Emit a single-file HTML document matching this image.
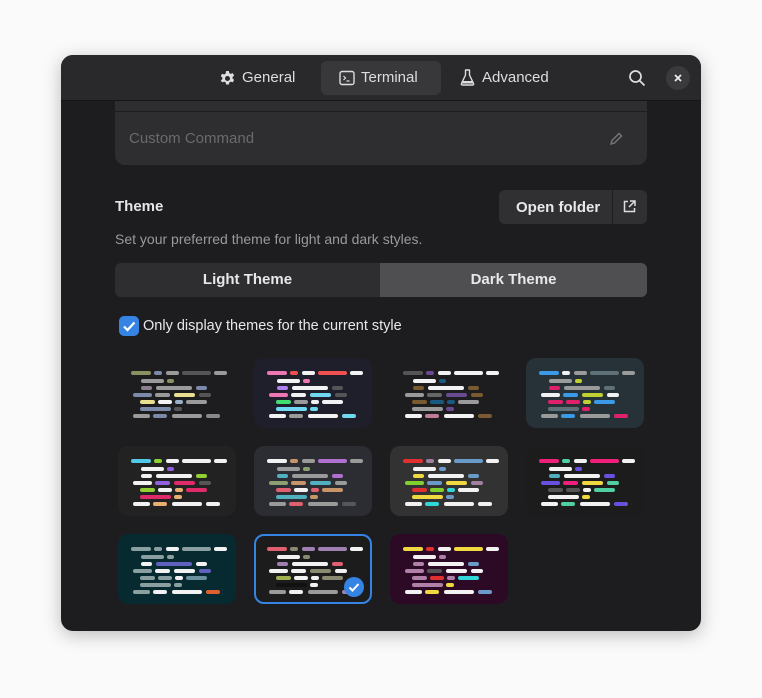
<!DOCTYPE html>
<html><head><style>
*{box-sizing:border-box;margin:0;padding:0}
body{width:762px;height:698px;background:#fafafa;font-family:"Liberation Sans",sans-serif;position:relative;overflow:hidden}
.win{position:absolute;left:61px;top:55px;width:640px;height:576px;background:#1d1d1f;border-radius:12px;overflow:hidden;box-shadow:0 4px 18px rgba(0,0,0,.25)}
.hdr{position:absolute;left:0;top:0;width:640px;height:46px;background:#29292b;border-bottom:1px solid #161617}
.t{position:absolute;color:#e8e8e8;font-size:15px}
.tab{position:absolute;top:6px;height:34px;line-height:34px;color:#ddd;font-size:15px}
.tile{position:absolute;width:118px;height:70px;border-radius:10px}
.b{position:absolute;height:4px;border-radius:2px}
</style></head><body>
<div class="win">
 <div class="hdr">
  <svg style="position:absolute;left:159px;top:16px" width="15" height="15" viewBox="0 0 16 16"><path fill="#ddd" d="M6.5 0h3l.4 2.2 1.6.9 2.1-.8 1.5 2.6-1.7 1.4v1.8l1.7 1.4-1.5 2.6-2.1-.8-1.6.9-.4 2.2h-3l-.4-2.2-1.6-.9-2.1.8L.8 10.1l1.7-1.4V6.9L.8 5.5l1.5-2.6 2.1.8 1.6-.9z M8 5.3a2.7 2.7 0 1 0 0 5.4 2.7 2.7 0 0 0 0-5.4z" fill-rule="evenodd"/></svg>
  <div class="tab" style="left:181px">General</div>
  <div style="position:absolute;left:260px;top:6px;width:120px;height:34px;background:#38383a;border-radius:6px"></div>
  <svg style="position:absolute;left:278px;top:15px" width="16" height="16" viewBox="0 0 16 16"><rect x="1" y="1.5" width="14" height="13" rx="2" fill="none" stroke="#ddd" stroke-width="1.4"/><path d="M4.5 6l2 2-2 2M7.5 11h3" stroke="#ddd" stroke-width="1.2" fill="none"/></svg>
  <div class="tab" style="left:300px">Terminal</div>
  <svg style="position:absolute;left:399px;top:14px" width="15" height="17" viewBox="0 0 15 17"><path d="M5 1h5M5.5 1v5L1.5 14.5q-.5 1.5 1 1.5h10q1.5 0 1-1.5L9.5 6V1" fill="none" stroke="#ddd" stroke-width="1.4"/><path d="M3 12h9l1 2.5H2z" fill="#ddd"/></svg>
  <div class="tab" style="left:421px">Advanced</div>
  <svg style="position:absolute;left:567px;top:14px" width="18" height="18" viewBox="0 0 18 18"><circle cx="7.5" cy="7.5" r="5.5" fill="none" stroke="#ddd" stroke-width="1.7"/><path d="M11.5 11.5l5 5" stroke="#ddd" stroke-width="1.8"/></svg>
  <div style="position:absolute;left:605px;top:11px;width:24px;height:24px;border-radius:12px;background:#3a3a3c"></div>
  <svg style="position:absolute;left:613px;top:19px" width="8" height="8"><path d="M1 1l6 6M7 1L1 7" stroke="#eee" stroke-width="1.7"/></svg>
 </div>
 <div style="position:absolute;left:54px;top:46px;width:532px;height:64px;background:#2e2e30;border-radius:0 0 10px 10px"></div>
 <div style="position:absolute;left:54px;top:56px;width:532px;height:1px;background:#1d1d1f"></div>
 <div class="t" style="left:68px;top:75px;color:#6a6a6c;font-size:15px">Custom Command</div>
 <svg style="position:absolute;left:547px;top:76px" width="16" height="16" viewBox="0 0 16 16"><path d="M3 13l1-3.5 7-7 2.5 2.5-7 7z" fill="none" stroke="#777" stroke-width="1.4"/></svg>
 <div class="t" style="left:54px;top:143px;font-weight:bold;font-size:15px;color:#e6e6e6">Theme</div>
 <div style="position:absolute;left:438px;top:135px;width:148px;height:34px;background:#303032;border-radius:6px"></div>
 <div style="position:absolute;left:551px;top:135px;width:1px;height:34px;background:#1d1d1f"></div>
 <div class="t" style="left:455px;top:144px;font-weight:bold;font-size:15px">Open folder</div>
 <svg style="position:absolute;left:562px;top:145px" width="13" height="13" viewBox="0 0 13 13"><path d="M5 1.5H1.5v10h10V8M7 1h5v5M12 1L6 7" fill="none" stroke="#ddd" stroke-width="1.5"/></svg>
 <div class="t" style="left:54px;top:176px;color:#9a9a9c;font-size:14px">Set your preferred theme for light and dark styles.</div>
 <div style="position:absolute;left:54px;top:208px;width:532px;height:34px;background:#2e2e30;border-radius:6px;overflow:hidden">
  <div style="position:absolute;left:265px;top:0;width:267px;height:34px;background:#4f4f51"></div>
  <div class="t" style="left:0;width:265px;text-align:center;top:8px;font-weight:bold">Light Theme</div>
  <div class="t" style="left:265px;width:267px;text-align:center;top:8px;font-weight:bold">Dark Theme</div>
 </div>
 <div style="position:absolute;left:58px;top:261px;width:20px;height:20px;border-radius:5px;background:#3584e4"></div>
 <svg style="position:absolute;left:58px;top:261px" width="20" height="20"><path d="M5 10.5l3.5 3.5 7-7.5" fill="none" stroke="#fff" stroke-width="2.2"/></svg>
 <div class="t" style="left:82px;top:263px;font-size:14.5px">Only display themes for the current style</div>
 <div id="tiles"></div>
</div>
<script>
var L=[[[13,20],[36,8],[48,13],[64,29],[96,13]],[[23,23],[49,7]],[[23,11],[38,36],[78,11]],[[15,19],[37,15],[56,21],[81,12]],[[22,15],[40,14],[57,8],[68,21]],[[22,31],[56,8]],[[15,17],[35,14],[54,30],[88,14]]];
var Y=[13,21,28,35,42,49,56];
var W='#f2f2f2',G='#9a9a9a',D='#555';
var T=[
 ['#1d1d1f',[['#8a9060','#7a8aa8',G,D,G],[G,'#8a9060'],['#8a8090',G,'#7a8aa8'],['#7a8aa8',G,'#e8e090',D],['#e8e090',W,'#9ab0c8',G],['#7a8aa8',D],[G,'#7a8aa8',G,'#888']]],
 ['#1f1e2b',[['#f075b5','#f05050',W,'#f05050',W],[W,'#f075b5'],['#b080f0',W,D],['#f075b5',W,'#70d8f0',D],['#40e070',G,W,W],['#70d8f0','#70d8f0'],[W,G,W,'#70d8f0']]],
 ['#1d1d1f',[[D,'#6a4a90',W,W,W],[W,'#1a5a80'],['#7a5a30',W,'#7a5a30'],[G,'#666','#6a4a90','#7a5a30'],['#7a5a30','#1a5a80','#1a5a80',G],[G,'#6a4a90'],[W,'#c07a9a',W,'#7a5a30']]],
 ['#263238',[['#3a9ae8',W,G,'#607078',G],[G,'#c0d030'],['#e0206a',G,'#607078'],[W,'#3a9ae8','#c0d030',W],['#e0206a','#e0206a','#c0d030','#3a9ae8'],['#607078','#e0206a'],[G,'#3a9ae8',G,'#e0206a']]],
 ['#222223',[['#50c8e8','#90d030',W,W,W],[W,'#9060e0'],[W,W,'#90d030'],[W,'#9060e0','#e02a6a',D],['#90d030',W,'#e8b070','#e02a6a'],['#e02a6a','#e8b070'],[W,'#e8b070',W,W]]],
 ['#2b2d33',[[W,'#c8956a',G,'#b070d0',G],[G,'#8aa070'],['#50b0c0',G,'#b070d0'],['#8aa070','#c8956a','#50b0c0',G],['#e06070',W,'#e06070','#c8956a'],['#50b0c0','#c8956a'],[G,'#e06070',G,'#555860']]],
 ['#323232',[['#e03030','#a080a0',W,'#6a9ac8',W],[W,'#6a9ac8'],['#f0d840',W,'#6a9ac8'],['#80d030','#6a9ac8','#f0d840','#a080a0'],['#e03030','#80d030','#30d8d8',W],['#f0d840','#6a9ac8'],[W,'#30d8d8',W,W]]],
 ['#1c1c1d',[['#f0207a','#50d0a0',W,'#f0207a',W],[W,'#6a50e0'],['#50b0c0',W,'#6a50e0'],['#6a50e0','#f0207a','#f0d840','#50d0a0'],[D,D,W,'#50d0a0'],[W,'#f0d840'],[W,'#50d0a0',W,'#6a50e0']]],
 ['#062a30',[['#8aa0a0','#8aa0a0',W,'#8aa0a0',W],['#8aa0a0','#8aa0a0'],[W,'#6060c0',W],['#8aa0a0',W,W,'#6060c0'],['#8aa0a0','#8aa0a0',W,'#6a90a0'],['#8aa0a0','#8aa0a0'],['#8aa0a0',W,W,'#e06030']]],
 ['#1c1c1d',[['#e06070','#8a8a70','#a080b0','#a080b0',W],[W,'#8a8a70'],['#a080b0',W,'#e06070'],[W,W,'#8a8a70',W],['#a0b050',W,W,'#8a8a70'],['#111',W],[G,W,G,'#a080b0']]],
 ['#2c0a26',[['#f0d840','#e03030',W,'#f0d840',W],[W,'#b080a8'],['#b080a8',W,'#6a9ac8'],['#b080a8','#555',W,W],['#b080a8','#e03030','#b080a8','#30d8d8'],['#b080a8','#f0d840'],[W,'#f0d840',W,'#6a9ac8']]]
];
var h='';
T.forEach(function(t,i){var x=57+(i%4)*136,y=303+Math.floor(i/4)*88;
 h+='<div class="tile" style="left:'+x+'px;top:'+y+'px;background:'+t[0]+(i==9?';border:2px solid #3584e4':'')+'">';
 L.forEach(function(r,ri){r.forEach(function(b,bi){h+='<div class="b" style="left:'+(b[0]-(i==9?2:0))+'px;top:'+(Y[ri]-(i==9?2:0))+'px;width:'+b[1]+'px;background:'+t[1][ri][bi]+'"></div>';});});
 if(i==9)h+='<div style="position:absolute;left:88px;top:41px;width:20px;height:20px;border-radius:10px;background:#3584e4"></div><svg style="position:absolute;left:88px;top:41px" width="20" height="20"><path d="M5.5 10.5l3 3 6-6.5" fill="none" stroke="#fff" stroke-width="2"/></svg>';
 h+='</div>';});
document.getElementById('tiles').innerHTML=h;
</script>
</body></html>
